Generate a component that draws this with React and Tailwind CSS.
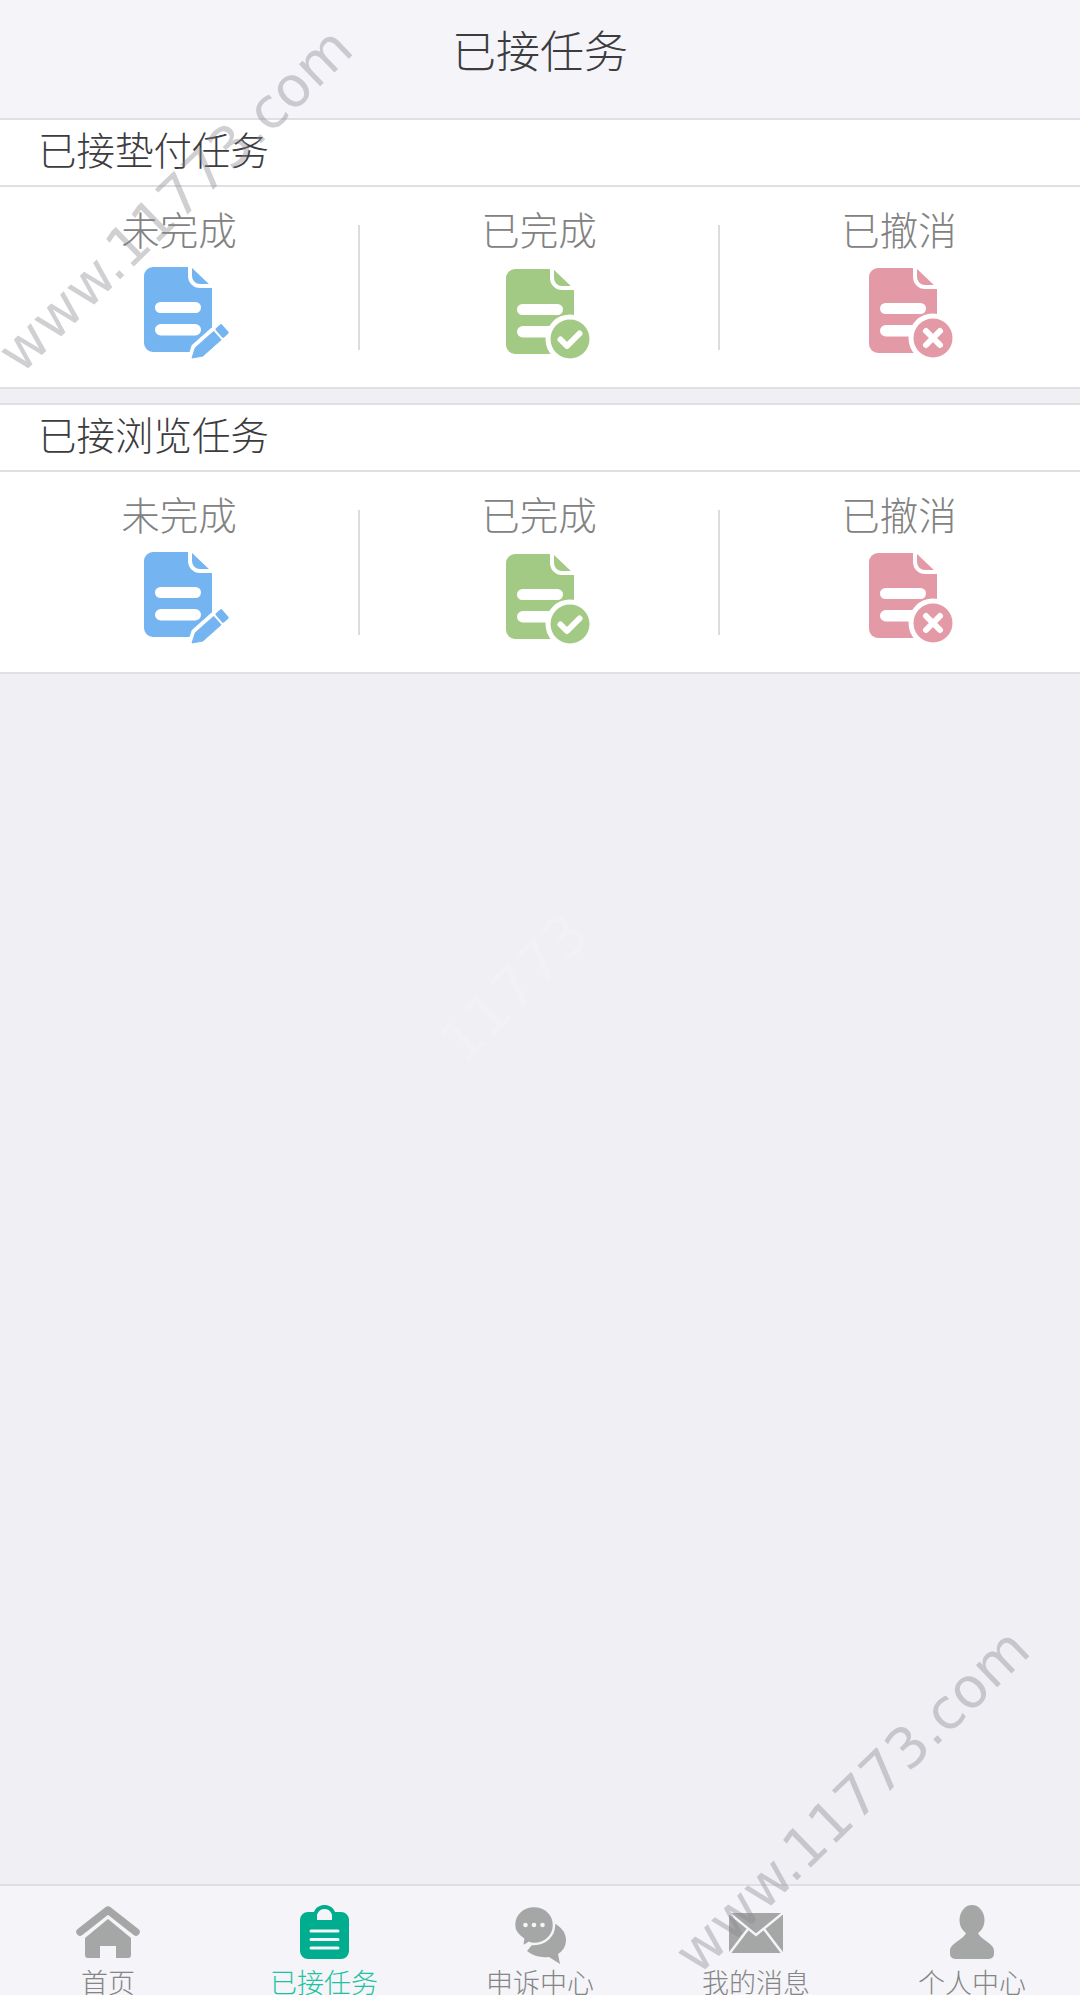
const fontCls = "font-['Noto_Sans_CJK_SC','Noto_Sans',sans-serif]";

function DocBase({ color, x, y, children }) {
  return (
    <svg width="100" height="100" viewBox="0 0 100 100" className="block overflow-visible">
      <g transform={`translate(${x} ${y})`}>
        <path
          d="M9 0H47L68 20V76a9 9 0 0 1-9 9H9a9 9 0 0 1-9-9V9a9 9 0 0 1 9-9Z"
          fill={color}
        />
        <path d="M46-2V9a10 10 0 0 0 10 10H70" fill="none" stroke="#fff" strokeWidth="4" />
        <rect x="11" y="35" width="46" height="11" rx="5.5" fill="#fff" />
        <rect x="11" y="57" width="46" height="11.5" rx="5.75" fill="#fff" />
        {children}
      </g>
    </svg>
  );
}

function PendingIcon() {
  const c = "#74b4f0";
  return (
    <DocBase color={c} x={15} y={2}>
      <g transform="translate(48 91) scale(.94) translate(-48 -91)">
        <path d="M48 91L51.500 80L71 62.700L79 71.700L59.500 89Z" fill="#fff" stroke="#fff" strokeWidth="9" strokeLinejoin="round" />
        <path d="M48 91L51.500 80L71 62.700L79 71.700L59.500 89Z" fill={c} stroke={c} strokeWidth="1" strokeLinejoin="round" />
        <path d="M74.500 60.500L79 56.500L85.500 64L81 68Z" fill={c} stroke={c} strokeWidth="3" strokeLinejoin="round" />
      </g>
    </DocBase>
  );
}

function DoneIcon() {
  const c = "#a3ca84";
  return (
    <DocBase color={c} x={17} y={4}>
      <circle cx="64" cy="70" r="24.500" fill="#fff" />
      <circle cx="64" cy="70" r="19.500" fill={c} />
      <path d="M54.500 70.500L61 77L73.500 64.500" fill="none" stroke="#fff" strokeWidth="6" strokeLinecap="round" strokeLinejoin="round" />
    </DocBase>
  );
}

function CancelIcon() {
  const c = "#e39aa6";
  return (
    <DocBase color={c} x={20} y={3}>
      <circle cx="64" cy="70" r="24.500" fill="#fff" />
      <circle cx="64" cy="70" r="19.500" fill={c} />
      <path d="M57 63L71 77M71 63L57 77" fill="none" stroke="#fff" strokeWidth="6" strokeLinecap="round" />
    </DocBase>
  );
}

function StatusCell({ label, icon }) {
  return (
    <div className="flex flex-1 flex-col items-center pt-[17px]">
      <div className="text-[38.5px] leading-[48px] font-light text-[#828282]">{label}</div>
      <div className="mt-[13px]">{icon}</div>
    </div>
  );
}

function TaskSection({ title }) {
  return (
    <section className="border-y-2 border-[#e0e0e4] bg-white">
      <div className="h-[65px] pl-[38px] text-[38.5px] leading-[57px] font-light text-[#3c3c3f]">{title}</div>
      <div className="flex h-[202px] items-start border-t-2 border-[#e0e0e4] pr-[2px]">
        <StatusCell label="未完成" icon={<PendingIcon />} />
        <div className="mt-[38px] h-[125px] w-[2px] bg-[#dcdcdc]" />
        <StatusCell label="已完成" icon={<DoneIcon />} />
        <div className="mt-[38px] h-[125px] w-[2px] bg-[#dcdcdc]" />
        <StatusCell label="已撤消" icon={<CancelIcon />} />
      </div>
    </section>
  );
}

function HomeIcon() {
  return (
    <svg width="64" height="54" viewBox="0 0 64 54" className="block">
      <path d="M4 27L32 5L60 27" fill="none" stroke="#a5a6a6" strokeWidth="7.500" strokeLinecap="round" strokeLinejoin="round" />
      <path d="M9 33L32 14L55 33V50a3 3 0 0 1-3 3H40V41H24V53H12a3 3 0 0 1-3-3Z" fill="#a5a6a6" />
    </svg>
  );
}

function ClipboardIcon() {
  return (
    <svg width="49" height="54" viewBox="0 0 49 54" className="block">
      <path d="M8 7H14C16 2 20 0 24.500 0S33 2 35 7H41a8 8 0 0 1 8 8V46a8 8 0 0 1-8 8H8a8 8 0 0 1-8-8V15a8 8 0 0 1 8-8Z" fill="#00ad8e" />
      <path d="M17 9.500C19 5 22 4 24.500 4S30 5 32 9.500V15H17Z" fill="#f4f4f9" />
      <path d="M11 26H38M11 34.500H38M11 43H38" stroke="#f4f4f9" strokeWidth="3" strokeLinecap="round" />
    </svg>
  );
}

function ChatIcon() {
  return (
    <svg width="54" height="60" viewBox="0 0 54 60" className="block">
      <path d="M38 17c9 3 15 10 15 18c0 6-3 11-8 14l2 10l-11-7c-8 1-16-1-22-6Z" fill="#a5a6a6" />
      <path d="M21 1C32 1 41 9 41 20S32 39 21 39c-2 0-4 0-5-1l-7 4l1-8C4 30 1 25 1 20C1 9 10 1 21 1Z" fill="#a5a6a6" stroke="#f4f4f9" strokeWidth="2.500" />
      <circle cx="12.500" cy="20" r="2.300" fill="#f4f4f9" />
      <circle cx="21" cy="20" r="2.300" fill="#f4f4f9" />
      <circle cx="29.500" cy="20" r="2.300" fill="#f4f4f9" />
    </svg>
  );
}

function MailIcon() {
  return (
    <svg width="54" height="42" viewBox="0 0 54 42" className="block">
      <rect width="54" height="40" fill="#a5a6a6" />
      <path d="M0 0L27 22L54 0M0 41L19 16M54 41L35 16" fill="none" stroke="#f4f4f9" strokeWidth="2.500" />
    </svg>
  );
}

function PersonIcon() {
  return (
    <svg width="44" height="54" viewBox="0 0 44 54" className="block">
      <ellipse cx="22" cy="15" rx="12.500" ry="15" fill="#a5a6a6" />
      <path d="M0 46C0 38 12 36 16 28H28C32 36 44 38 44 46V49a5 5 0 0 1-5 5H5a5 5 0 0 1-5-5Z" fill="#a5a6a6" />
    </svg>
  );
}

function TabItem({ label, icon, active }) {
  return (
    <div className="flex flex-1 flex-col items-center">
      <div className="flex h-[60px] shrink-0 items-start">{icon}</div>
      <div className={`shrink-0 text-[27px] leading-[34px] font-light ${active ? "text-[#1fc29f]" : "text-[#858585]"}`}>{label}</div>
    </div>
  );
}

export default function App() {
  return (
    <div className={`relative flex h-[1995px] w-[1080px] flex-col overflow-hidden bg-[#efeff4] ${fontCls}`}>
      <header className="h-[118px] bg-[#f4f4f9] text-center text-[44px] leading-[99px] font-light text-[#3c3c3f]">
        已接任务
      </header>

      <TaskSection title="已接垫付任务" />
      <div className="h-[14px]" />
      <TaskSection title="已接浏览任务" />

      <div className="flex-1" />

      <nav className="flex h-[111px] border-t-2 border-[#dfdfe3] bg-[#f4f4f9] pt-[19px]">
        <TabItem label="首页" icon={<HomeIcon />} />
        <TabItem label="已接任务" icon={<ClipboardIcon />} active />
        <TabItem label="申诉中心" icon={<ChatIcon />} />
        <TabItem label="我的消息" icon={<div className="pt-[8px]"><MailIcon /></div>} />
        <TabItem label="个人中心" icon={<PersonIcon />} />
      </nav>

      {/* watermarks */}
      <div className="pointer-events-none absolute top-[200px] left-[175px] -translate-x-1/2 -translate-y-1/2 rotate-[-44deg] font-['DejaVu_Sans',sans-serif] text-[56px] leading-none whitespace-nowrap text-[#8a8a90]/40">
        www.11773.com
      </div>
      <div className="pointer-events-none absolute top-[988px] left-[514px] -translate-x-1/2 -translate-y-1/2 rotate-[-45deg] font-['DejaVu_Sans',sans-serif] text-[57px] leading-none whitespace-nowrap text-white/20">
        11773
      </div>
      <div className="pointer-events-none absolute top-[1801px] left-[852px] -translate-x-1/2 -translate-y-1/2 rotate-[-44deg] font-['DejaVu_Sans',sans-serif] text-[56px] leading-none whitespace-nowrap text-[#8a8a90]/40">
        www.11773.com
      </div>
    </div>
  );
}
